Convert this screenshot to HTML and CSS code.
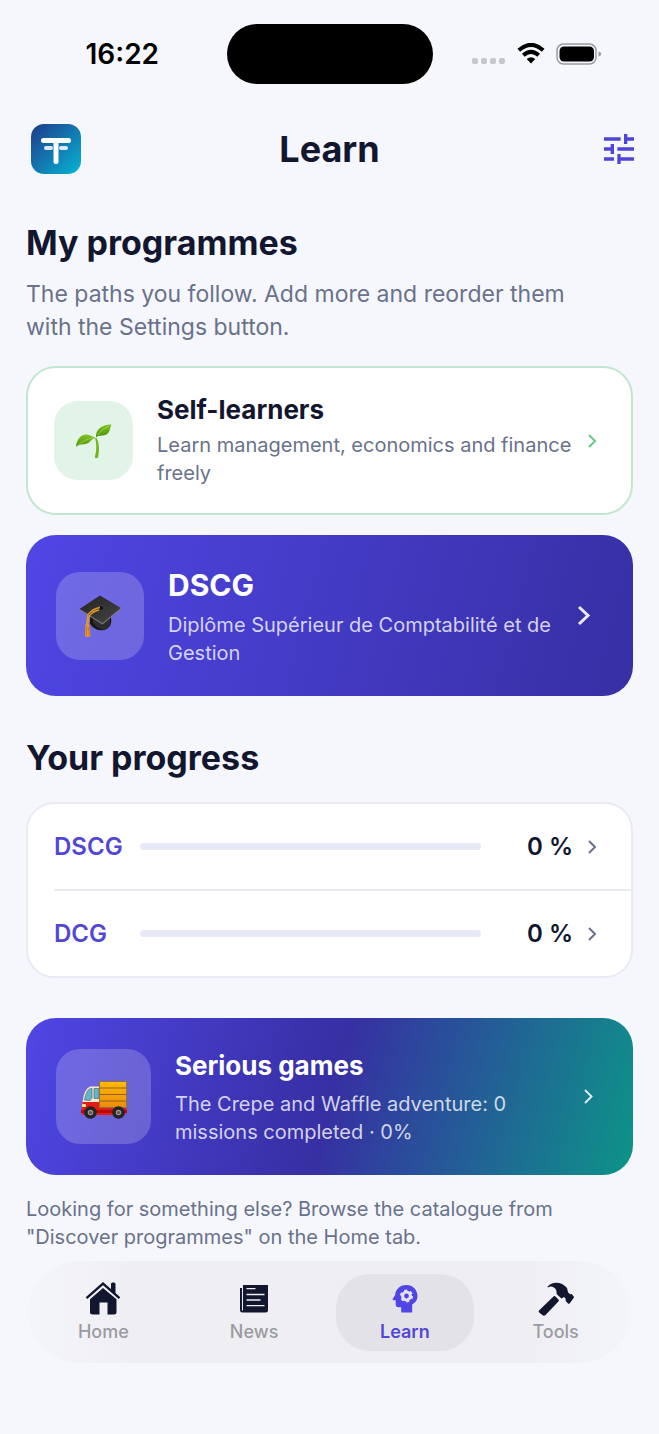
FILE: index.html
```
<!DOCTYPE html>
<html lang="en">
<head>
    <meta charset="UTF-8">
    <meta name="viewport" content="width=device-width, initial-scale=1.0">
    <title>Learn</title>
    <link rel="stylesheet" href="styles.css">
</head>
<body>
    <div class="status-bar">
        <div class="status-left">16:22</div>
        <div class="island"></div>
        <div class="status-right">
            <svg width="34" height="20" viewBox="0 0 34 20" fill="#c5c6cb">
                <rect x="0" y="14" width="6" height="6" rx="2"/>
                <rect x="9" y="14" width="6" height="6" rx="2"/>
                <rect x="18" y="14" width="6" height="6" rx="2"/>
                <rect x="27" y="14" width="6" height="6" rx="2"/>
            </svg>
            <svg width="28" height="21" viewBox="0 0 28 21">
                <path d="M1.800 7.200Q14-3.600 26.200 7.200" fill="none" stroke="#000" stroke-width="4"/>
                <path d="M6.300 12.200Q14 5.400 21.700 12.200" fill="none" stroke="#000" stroke-width="4"/>
                <path d="M9.700 16Q14 12.400 18.300 16L14 20.500z"/>
            </svg>
            <svg width="46" height="22" viewBox="0 0 46 22">
                <rect x="1" y="1" width="39" height="20" rx="6.500" fill="none" stroke="#9b9ca0" stroke-width="1.500"/>
                <rect x="3.500" y="3.500" width="34.500" height="15" rx="4.500"/>
                <path d="M42.500 8.500q2.800 .8 2.800 2.500t-2.800 2.500z" fill="#9b9ca0"/>
            </svg>
        </div>
    </div>

    <header class="app-bar">
        <a class="logo" href="#" aria-label="Home">
            <svg width="50" height="50" viewBox="0 0 50 50">
                <defs>
                    <linearGradient id="logo-bg" x1="0" y1="0" x2="1" y2="1">
                        <stop offset="0" stop-color="#1e3a8a"/>
                        <stop offset="1" stop-color="#06b6d4"/>
                    </linearGradient>
                </defs>
                <rect width="50" height="50" rx="13" fill="url(#logo-bg)"/>
                <g fill="#fff">
                    <rect x="10" y="14" width="30" height="5" rx="2.500"/>
                    <rect x="22.500" y="15" width="5" height="25" rx="2.500"/>
                    <rect x="13" y="22" width="9" height="4" rx="2" opacity=".85"/>
                    <rect x="28" y="22" width="9" height="4" rx="2" opacity=".85"/>
                </g>
            </svg>
        </a>
        <h1>Learn</h1>
        <button class="settings" aria-label="Settings">
            <svg width="40" height="40" viewBox="0 0 24 24" fill="#4f46d8">
                <path d="M3 17v2h6v-2H3zM3 5v2h10V5H3zm10 16v-2h8v-2h-8v-2h-2v6h2zM7 9v2H3v2h4v2h2V9H7zm14 4v-2H11v2h10zm-6-4h2V7h4V5h-4V3h-2v6z"/>
            </svg>
        </button>
    </header>

    <main>
        <h2>My programmes</h2>
        <p class="intro">The paths you follow. Add more and reorder them with the Settings button.</p>

        <a class="card self" href="#">
            <span class="tile">
                <svg width="36" height="36" viewBox="0 0 36 36">
                    <defs>
                        <linearGradient id="leaf" x1="0" y1="0" x2="0" y2="1">
                            <stop offset="0" stop-color="#83c321"/>
                            <stop offset="1" stop-color="#46920b"/>
                        </linearGradient>
                    </defs>
                    <path d="M20.500 15C23.500 21 23.500 27 22 34.500q-2 1.500-3.200-.3C21 27 20.500 20 19 15z" fill="#71b51c"/>
                    <path d="M0 24C.5 16 5.500 11.500 10 11.500c4 0 7.500 2.500 9.500 3.500-4 0-5 5-10 6C6 21.500 3 21 0 24z" fill="url(#leaf)"/>
                    <path d="M20 14.500C19.500 7 25 1.500 35.500 1.500 34 4 34.500 9 30.500 11.500 27 13.500 23 11.500 20 14.500z" fill="url(#leaf)"/>
                    <path d="M3 21q7-5 14-6.500M21.500 12Q26 6 33 3" fill="none" stroke="#b5dd54" stroke-width=".7"/>
                </svg>
            </span>
            <span class="card-text">
                <strong>Self-learners</strong>
                <span>Learn management, economics and finance freely</span>
            </span>
            <svg class="chevron" width="24" height="30" viewBox="0 0 24 30"><path d="M8 9l6 6-6 6"/></svg>
        </a>

        <a class="card dscg" href="#">
            <span class="tile">
                <svg width="44" height="44" viewBox="0 0 44 44">
                    <defs>
                        <linearGradient id="board" x1="0" y1="0" x2="1" y2="1">
                            <stop offset="0" stop-color="#222"/>
                            <stop offset="1" stop-color="#454545"/>
                        </linearGradient>
                    </defs>
                    <path d="M12 22v8c5 7 13 8 18 4 4-3 4-9 2-13z" fill="#161616"/>
                    <path d="M15 25v4q5 6 11 7 6-2 6-8v-7z" fill="#2d2d2d"/>
                    <path d="M22 1.500L43 14 24.500 29 1.500 15z" fill="url(#board)"/>
                    <path d="M1.500 15L24.500 29 43 14v1.200L24.500 30.500 1.500 16.200z" fill="#777"/>
                    <ellipse cx="23" cy="14" rx="3" ry="2.300" fill="#111" stroke="#555" stroke-width=".6"/>
                    <path d="M22 13.500Q14 15 10 20.500L8.500 30M21 16Q14 17.500 11.500 22L9.500 31" fill="none" stroke="#e09a28" stroke-width="1.300"/>
                    <path d="M7.500 30h3.500l1.500 12q-3 1.500-5.500 .3z" fill="#eb9a22"/>
                    <path d="M9 32l-.7 9.500M10.500 33l.7 8.500" stroke="#b96a10" stroke-width=".7"/>
                </svg>
            </span>
            <span class="card-text">
                <strong>DSCG</strong>
                <span>Diplôme Supérieur de Comptabilité et de Gestion</span>
            </span>
            <svg class="chevron" width="39" height="40" viewBox="0 0 39 40"><path d="M15 11l9 8.500-9 8.500"/></svg>
        </a>

        <h2 class="progress-title">Your progress</h2>
        <div class="progress-card">
            <a class="progress-row" href="#">
                <label for="dscg-progress">DSCG</label>
                <progress id="dscg-progress" value="0" max="100"></progress>
                <span class="percent">0 %</span>
                <svg class="chevron" width="24" height="30" viewBox="0 0 24 30"><path d="M8 9l6 6-6 6"/></svg>
            </a>
            <a class="progress-row" href="#">
                <label for="dcg-progress">DCG</label>
                <progress id="dcg-progress" value="0" max="100"></progress>
                <span class="percent">0 %</span>
                <svg class="chevron" width="24" height="30" viewBox="0 0 24 30"><path d="M8 9l6 6-6 6"/></svg>
            </a>
        </div>

        <a class="card games" href="#">
            <span class="tile">
                <svg width="48" height="48" viewBox="0 0 48 48">
                    <defs>
                        <linearGradient id="cargo" x1="0" y1="0" x2="0" y2="1">
                            <stop offset="0" stop-color="#ffba08"/>
                            <stop offset="1" stop-color="#ee8a0d"/>
                        </linearGradient>
                    </defs>
                    <g transform="translate(1 4)">
                        <path d="M1.500 28V25Q3 12 9 9.500h10V30z" fill="#f3ead2"/>
                        <path d="M3.500 23Q5 13 9.500 11.500H11V21L9 23.500zM13 11.500h5v10h-5z" fill="#63b5ca" stroke="#5a6a70" stroke-width=".7"/>
                        <path d="M1.500 25h18v5H45l1 4-2 4H1.500L.5 34z" fill="#e51c12"/>
                        <path d="M0 33h46v3H0z" fill="#b50b0b"/>
                        <rect x="18.500" y="4.500" width="27" height="26" fill="url(#cargo)" stroke="#8c7440" stroke-width="1"/>
                        <path d="M18.500 11h27M18.500 17.500h27M18.500 24h27" stroke="#8c6420" stroke-width="1"/>
                        <rect x="1" y="27" width="4" height="3" rx="1" fill="#ffe38a"/>
                        <g fill="#999" stroke="#242424" stroke-width="3.500">
                            <circle cx="9.500" cy="35.500" r="4.500"/>
                            <circle cx="37.500" cy="35.500" r="4.500"/>
                        </g>
                        <circle cx="9.500" cy="35.500" r="1.600" fill="#555"/>
                        <circle cx="37.500" cy="35.500" r="1.600" fill="#555"/>
                    </g>
                </svg>
            </span>
            <span class="card-text">
                <strong>Serious games</strong>
                <span>The Crepe and Waffle adventure: 0 missions completed · 0%</span>
            </span>
            <svg class="chevron" width="29" height="30" viewBox="0 0 29 30"><path d="M11 8l6.500 6.500-6.500 6.500"/></svg>
        </a>

        <p class="hint">Looking for something else? Browse the catalogue from "Discover programmes" on the Home tab.</p>
    </main>

    <nav class="tab-bar">
        <a href="#">
            <svg width="36" height="36" viewBox="0 0 36 36" fill="#12162f">
                <path d="M26 3q0-1.500 1.500-1.500h1.500q1.500 0 1.500 1.500v10L26 9.200z"/>
                <path d="M1.500 17.200L18 2.700l16.500 14.500" fill="none" stroke="#12162f" stroke-width="2.400"/>
                <path d="M5 18.300L18 7l13.500 11.300V31q0 2.500-2.500 2.500h-6.500V21.500h-8v12H7.500Q5 33.500 5 31z"/>
            </svg>
            <span>Home</span>
        </a>
        <a href="#">
            <svg width="36" height="36" viewBox="0 0 36 36" fill="#12162f">
                <path d="M4 7h2v22.500h1V4h25v25q0 2.500-2.500 2.500h-23Q4 31.500 4 29z"/>
                <path d="M10.500 7.700h9M10.500 13.500h18M10.500 19h14M10.500 24.700h18" stroke="#eeeef3" stroke-width="1.300"/>
            </svg>
            <span>News</span>
        </a>
        <a class="active" href="#">
            <svg width="36" height="36" viewBox="0 0 36 36">
                <g transform="translate(1 -1)">
                    <path d="M18.500 5C11.500 5 7.300 10 7.200 15L4.800 18.800q-.7 1.400.7 1.400h2.200v4q0 3 3 3h2.500V32.500h11V24.500Q29.500 21.500 29.500 16C29.500 9.800 24.600 5 18.500 5z" fill="#4f46e5"/>
                    <circle cx="18.500" cy="16" r="3.900" fill="none" stroke="#e3e3e8" stroke-width="3"/>
                    <circle cx="18.500" cy="16" r="5.200" fill="none" stroke="#e3e3e8" stroke-width="2.600" stroke-dasharray="2.700 2.745"/>
                </g>
            </svg>
            <span>Learn</span>
        </a>
        <a href="#">
            <svg width="36" height="36" viewBox="0 0 36 36" fill="#12162f">
                <path d="M1 29.500L15.500 15.500q1-.8 2 .1l3 3q.8 1-.1 2L7.500 34q-1.600 1.500-3.200 0L1.200 31.500q-1-1-.2-2z"/>
                <path d="M9.500 5.800C14-.2 24 .5 29 7l1 4.200 2 2 1.700-.2 2 2.500q.5.700-.1 1.400l-4 5.500q-.9.600-1.600 0l-2.300-2.500v-2.200l-1.600-1.600-2.700 1.400-4.800-4.600q.5-5.500-4.200-7.200-2-.6-4.500.8z"/>
            </svg>
            <span>Tools</span>
        </a>
    </nav>
</body>
</html>
```
FILE: styles.css
```
* {
    box-sizing: border-box;
}
body {
    font-family: Inter, "Liberation Sans", sans-serif;
    margin: 0;
    background-color: #f5f7fd;
    color: #12162f;
}
a {
    color: inherit;
    text-decoration: none;
}
svg {
    display: block;
    flex-shrink: 0;
}
.status-bar {
    display: grid;
    grid-template-columns: 1fr auto 1fr;
    align-items: center;
    height: 107px;
}
.status-left,
.status-right {
    display: flex;
    align-items: center;
    justify-content: center;
}
.status-left {
    padding-left: 18px;
    font-size: 28px;
    font-weight: 600;
    color: #000;
}
.status-right {
    padding-right: 18px;
    gap: 11px;
}
.island {
    width: 206px;
    height: 60px;
    border-radius: 30px;
    background-color: #000;
}
.app-bar {
    display: grid;
    grid-template-columns: 1fr auto 1fr;
    align-items: center;
    height: 83px;
    padding: 0 20px;
}
.logo {
    justify-self: start;
    padding: 0 11px;
}
h1 {
    margin: 0;
    font-size: 36px;
    line-height: 44px;
    font-weight: 700;
}
.settings {
    justify-self: end;
    padding: 0;
    border: 0;
    background: none;
    cursor: pointer;
}
main {
    padding: 33px 26px 0;
}
h2 {
    margin: 0;
    font-size: 34px;
    line-height: 40px;
    font-weight: 700;
}
.intro,
.hint {
    margin: 0;
    color: #69728a;
}
.intro {
    padding: 15px 40px 22px 0;
    font-size: 23px;
    line-height: 33px;
}
.card {
    display: flex;
    align-items: center;
    gap: 24px;
    border-radius: 30px;
    color: #fff;
}
.card-text {
    flex: 1;
    display: flex;
    flex-direction: column;
    gap: 5px;
    font-size: 20px;
    line-height: 28px;
}
.card-text strong {
    font-size: 26px;
    line-height: 32px;
    font-weight: 700;
}
.tile {
    display: flex;
    align-items: center;
    justify-content: center;
    flex-shrink: 0;
    border-radius: 24px;
    background-color: rgba(255, 255, 255, 0.2);
}
.chevron {
    margin-left: -24px;
    fill: none;
    stroke: currentColor;
    stroke-width: 2;
}
.self {
    min-height: 149px;
    margin-bottom: 20px;
    padding: 24px 26px;
    border: 2px solid #c3e6cf;
    background-color: #fff;
    color: #12162f;
}
.self .tile {
    width: 79px;
    height: 79px;
    background-color: #e2f4e8;
}
.self .card-text span {
    color: #69728a;
}
.self .chevron {
    color: #6cc78c;
}
.dscg {
    min-height: 161px;
    padding: 28px 30px;
    background: linear-gradient(105deg, #4f46e5, #372fa3);
}
.dscg .tile {
    width: 88px;
    height: 88px;
}
.dscg strong {
    font-size: 30px;
    line-height: 42px;
}
.dscg .card-text span,
.games .card-text span {
    color: rgba(255, 255, 255, 0.78);
}
.dscg .chevron {
    stroke-width: 3;
    opacity: 0.9;
}
.progress-title {
    padding: 42px 0 24px;
}
.progress-card {
    margin-bottom: 40px;
    padding-left: 26px;
    border: 2px solid #e9eaf4;
    border-radius: 28px;
    background-color: #fff;
}
.progress-row {
    display: flex;
    align-items: center;
    height: 85px;
    padding-right: 26px;
    font-size: 24px;
    font-weight: 600;
}
.progress-row + .progress-row {
    height: 87px;
    border-top: 2px solid #e9eaf4;
}
.progress-row label {
    width: 86px;
    color: #5247d5;
    cursor: pointer;
}
.progress-row progress {
    flex: 1;
    min-width: 0;
    height: 7px;
    border: 0;
    border-radius: 4px;
    background-color: #e8e9f6;
    appearance: none;
    overflow: hidden;
}
progress::-webkit-progress-bar {
    background-color: #e8e9f6;
}
progress::-webkit-progress-value {
    background-color: #4f46e5;
}
.percent {
    width: 92px;
    text-align: right;
}
.progress-row .chevron {
    margin-left: 8px;
    color: #69728a;
}
.games {
    min-height: 157px;
    padding: 28px 30px;
    background: linear-gradient(105deg, #4f46e5, #372fa3 50%, #0d9488);
}
.games .tile {
    width: 95px;
    height: 95px;
}
.games strong {
    line-height: 38px;
}
.games .chevron {
    opacity: 0.85;
}
.hint {
    padding-top: 20px;
    font-size: 20px;
    line-height: 28px;
}
.tab-bar {
    display: flex;
    margin: 10px 28px 0;
    padding: 13px 0 12px;
    border-radius: 51px;
    background: linear-gradient(90deg, #f4f5fa, #efeff3 18%, #eeeef3 82%, #f4f5fa);
}
.tab-bar a {
    flex: 1;
    display: flex;
    flex-direction: column;
    align-items: center;
    gap: 2px;
    margin: 0 6px;
    padding: 7px 0 6px;
    border-radius: 34px;
    font-size: 18px;
    line-height: 26px;
    font-weight: 500;
    color: #9b9b9f;
}
.tab-bar .active {
    background-color: #e2e2e7;
    color: #5247d5;
    font-weight: 600;
}
```
